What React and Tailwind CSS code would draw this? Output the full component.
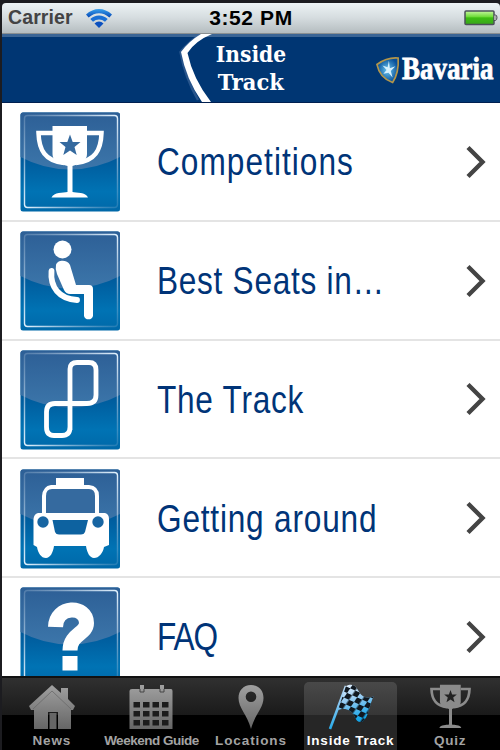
import React from 'react';

const TrophyShape = ({ star }) => (
  <>
    <path d="M32.500 14H67V42C67 48 62 51.500 57 52.500L52.500 54V80C56 81 66 80 68 85.500H31.500C34 80 43 81 47.500 80V54L42 52.500C36 50 32.500 47 32.500 42Z" fill="currentColor" />
    <path d="M33 21H18.500C19 38 25 49 44 51" fill="none" stroke="currentColor" strokeWidth="4.500" />
    <path d="M67 21H81.500C81 38 75 49 56 51" fill="none" stroke="currentColor" strokeWidth="4.500" />
    <path d="M50 22.500L52.700 30H60.500L54.500 35L56.700 43L50 38.400L43.300 43L45.500 35L39.500 30H47.300Z" fill={star} />
  </>
);

const SeatShape = () => (
  <g fill="none" stroke="white" strokeLinecap="round" strokeLinejoin="round">
    <circle cx="42.500" cy="18.500" r="9" fill="white" stroke="none" />
    <path d="M36 34C37 29 47 28 50 34L56 54H69Q73 54 73 58V85A4.700 4.700 0 0 1 64 85V63H50Q46 63 44 59L37 43Q35 38 36 34Z" fill="white" stroke="none" />
    <path d="M31.500 40C30 56 39 68 57 69" strokeWidth="5.800" />
  </g>
);

const TrackShape = () => (
  <path
    d="M50 80V19Q50 12.500 57 12.500H69Q76 12.500 76 20V45Q76 53.500 67 53.500H35Q26.500 53.500 26.500 62V77Q26.500 85.500 34 85.500H42Q50 85.500 50 77"
    fill="none"
    stroke="white"
    strokeWidth="4.800"
  />
);

const TaxiShape = () => (
  <>
    <path d="M36 9H64V16H69Q79 17 79 27V44H85Q89 45 89 50V76L84 78C83 84 79 89 74 89C70 89 67 84 66 77H34C33 84 30 89 26 89C21 89 18 84 17 78L13.500 76V50Q14 45 18 44H22V27Q23 17 31 16H36Z" fill="white" />
    <path d="M32 20H69Q75 20 75 27V44H26V27Q26 20 32 20Z" fill="#356a9f" />
    <path d="M32.500 51H68L65 63Q64 65.500 61 65.500H39Q36 65.500 35 63Z" fill="#0d62a0" />
    <circle cx="23" cy="53" r="5.700" fill="#1765a2" />
    <circle cx="78" cy="53" r="5.700" fill="#1765a2" />
  </>
);

const QuestionShape = () => (
  <>
    <path d="M35.500 40C36 18 66.500 18 66.500 36C66.500 47 50 47 50 63.500" fill="none" stroke="white" strokeWidth="15" />
    <rect x="42.500" y="69" width="15" height="14.500" fill="white" />
  </>
);

const rows = [
  { label: 'Competitions', text: 'tracking-[1.3px]', icon: <TrophyShape star="#356a9f" /> },
  { label: 'Best Seats in…', text: 'tracking-[0.9px]', icon: <SeatShape /> },
  { label: 'The Track', text: 'tracking-[0.9px]', icon: <TrackShape /> },
  { label: 'Getting around', text: 'tracking-[1px]', icon: <TaxiShape /> },
  { label: 'FAQ', text: 'tracking-[-1.3px]', icon: <QuestionShape /> },
];

const Tile = ({ children }) => (
  <svg viewBox="0 0 100 100" className="w-[100px] h-[100px] shrink-0 text-white">
    <defs>
      <linearGradient id="tileBase" x2="0" y2="1">
        <stop offset=".45" stopColor="#00599a" />
        <stop offset=".8" stopColor="#0073b4" />
        <stop offset="1" stopColor="#0068a8" />
      </linearGradient>
      <linearGradient id="tileGloss" x2="0" y2="1">
        <stop offset="0" stopColor="#2d5f96" />
        <stop offset="1" stopColor="#3c76aa" />
      </linearGradient>
      <linearGradient id="tileLine" x2="1" y2="1">
        <stop offset="0" stopColor="#a9c1da" stopOpacity=".3" />
        <stop offset=".5" stopColor="#e4f3ff" />
        <stop offset="1" stopColor="#a9c1da" stopOpacity=".2" />
      </linearGradient>
    </defs>
    <rect x=".5" y=".5" width="99.500" height="99" rx="2.500" fill="url(#tileBase)" />
    <path d="M.5 3Q.5.500 3 .5H97.500Q100 .5 100 3V45Q76 57.500 50 57.500T.5 45Z" fill="url(#tileGloss)" />
    <rect x="4.500" y="3.500" width="93" height="92" rx="3" fill="none" stroke="url(#tileLine)" strokeWidth="1.400" />
    {children}
  </svg>
);

const Chevron = () => (
  <svg viewBox="0 0 22 34" className="w-[22px] h-[34px] shrink-0 -mt-[1px]">
    <path d="M3 2.500L17.500 17L3 31.500" fill="none" stroke="#444" strokeWidth="4.400" />
  </svg>
);

const HouseIcon = () => (
  <svg viewBox="0 0 48 46" className="w-12 h-[46px]">
    <path d="M24 1L33 9V4H40V15L47 22L45 26H43V45H30V28H20V45H6V26H3L1 22Z" fill="url(#tabGrey)" />
    <path d="M5 25L24 7L43 25" fill="none" stroke="#6a6a6a" strokeWidth=".8" />
    <rect x="21.500" y="29" width="7" height="16" fill="#666" />
  </svg>
);

const CalendarIcon = () => (
  <svg viewBox="0 0 44 46" className="w-11 h-[46px]">
    <path d="M3 5H11V1H15V5H31V1H35V5H42Q43.500 5 43.500 7V45H.5V7Q.5 5 3 5Z" fill="url(#tabGrey)" />
    <path d="M11 5V8H15V5M31 5V8H35V5" fill="none" stroke="#444" strokeWidth="1" />
    {[18, 27, 36].map((y) =>
      [4.5, 14, 23.5, 33].map((x) => (
        <rect key={`${x}-${y}`} x={x} y={y} width="6.500" height="5.500" fill="#1c1c1c" />
      ))
    )}
  </svg>
);

const PinIcon = () => (
  <svg viewBox="0 0 28 46" className="w-7 h-[46px]">
    <path fillRule="evenodd" d="M14 1C6 1 1.500 7 1.500 14C1.500 24 10 30 14 45C18 30 26.500 24 26.500 14C26.500 7 22 1 14 1ZM14 7.500A5.300 5.300 0 1 1 14 18.100A5.300 5.300 0 1 1 14 7.500Z" fill="url(#tabGrey)" />
  </svg>
);

const FlagIcon = () => (
  <svg viewBox="0 0 48 48" className="w-12 h-12">
    <defs>
      <linearGradient id="flagBlue" x2=".3" y2="1">
        <stop offset="0" stopColor="#edf4ff" />
        <stop offset=".5" stopColor="#8fc9f2" />
        <stop offset="1" stopColor="#13a5e8" />
      </linearGradient>
      <pattern id="flagChecks" width="11" height="11" patternUnits="userSpaceOnUse" patternTransform="rotate(24) skewX(-10)">
        <rect width="5.500" height="5.500" fill="#101820" />
        <rect x="5.500" y="5.500" width="5.500" height="5.500" fill="#101820" />
      </pattern>
    </defs>
    <path d="M19 2L3 45" stroke="url(#flagBlue)" strokeWidth="2.600" />
    <path d="M19 2C26-1 29 2 32 8C36 14 41 15 47 12C42 20 42 34 35 38C27 39 29 30 23 27C19 24 14 25 11 26Z" fill="url(#flagBlue)" />
    <path d="M19 2C26-1 29 2 32 8C36 14 41 15 47 12C42 20 42 34 35 38C27 39 29 30 23 27C19 24 14 25 11 26Z" fill="url(#flagChecks)" />
  </svg>
);

const CupIcon = () => (
  <svg viewBox="16 13 68 74" className="w-[41px] h-[45px] text-[#8b8b8b]">
    <TrophyShape star="#222" />
  </svg>
);

const tabs = [
  { label: 'News', text: 'tracking-[0.8px]', icon: <HouseIcon /> },
  { label: 'Weekend Guide', text: 'tracking-[-0.5px]', icon: <CalendarIcon /> },
  { label: 'Locations', text: 'tracking-[0.9px]', icon: <PinIcon /> },
  { label: 'Inside Track', text: 'tracking-[0.8px]', icon: <FlagIcon />, active: true },
  { label: 'Quiz', text: 'tracking-[0.8px]', icon: <CupIcon /> },
];

const StatusBar = () => (
  <div className="relative h-[31px] shrink-0 rounded-t-[4px] bg-gradient-to-b from-[#edf3f5] via-[#d5dcdf] to-[#b5bdc0] border-b border-[#8a8f91] flex items-center justify-between pl-[6px] pr-[2px]">
    <div className="flex items-center gap-[13px]">
      <span className="text-[19.5px] leading-none font-bold text-[#444] tracking-[0.1px]">Carrier</span>
      <svg viewBox="0 0 26 19" className="w-[26px] h-[19px]">
        <defs>
          <linearGradient id="wifi" x2="0" y2="1">
            <stop offset="0" stopColor="#37a0ec" />
            <stop offset="1" stopColor="#0647b6" />
          </linearGradient>
        </defs>
        <path d="M13 0Q20 0 26 5.500L23.400 8.500Q18.500 4.200 13 4.200T2.600 8.500L0 5.500Q6 0 13 0Z" fill="url(#wifi)" />
        <path d="M13 6.500Q18 6.500 21.700 10L19 12.800Q16.500 10.500 13 10.500T7 12.800L4.300 10Q8 6.500 13 6.500Z" fill="#1a6fd4" />
        <path d="M13 12.500Q15.500 12.500 17.500 14.500L13 19L8.500 14.500Q10.500 12.500 13 12.500Z" fill="#0b50bf" />
      </svg>
    </div>
    <span className="absolute inset-x-0 top-[4px] text-center text-[21px] leading-[22px] font-bold text-black tracking-[0.6px]">3:52 PM</span>
    <svg viewBox="0 0 34 16" className="w-[34px] h-4">
      <defs>
        <linearGradient id="battery" x2="0" y2="1">
          <stop offset="0" stopColor="#c6f6a0" />
          <stop offset=".45" stopColor="#6adb33" />
          <stop offset=".5" stopColor="#3dbd12" />
          <stop offset="1" stopColor="#37a51a" />
        </linearGradient>
      </defs>
      <rect x="1" y="1" width="29" height="13.500" rx="1" fill="url(#battery)" stroke="#4b5158" strokeWidth="1.500" />
      <path d="M30 5H31.500Q33 5 33 7.500T31.500 10.500H30" fill="#aaa" stroke="#4b5158" />
    </svg>
  </div>
);

const Header = () => (
  <div className="h-[69px] shrink-0 bg-[#003673] border-t-[3px] border-t-[#3b6595] border-b border-b-[#001f50] flex items-center">
    <div className="w-[176px] shrink-0" />
    <svg viewBox="0 0 36 68" className="w-9 h-[68px] shrink-0 -mt-[3px]">
      <path d="M23 0Q11 8 2.500 18Q7 43 20 66" fill="none" stroke="#426b9d" strokeWidth="2.500" opacity=".6" />
      <path d="M34 0Q17 7 9.500 19Q15 45 33 68H24Q8 45 3 18Q11 7 23 0Z" fill="white" />
    </svg>
    <div className="w-[74px] shrink-0 text-center text-white font-bold text-[22.5px] leading-[28px] font-['DejaVu_Serif_Condensed','DejaVu_Serif',serif] flex flex-col items-center pb-[3px]">
      <span>Inside</span>
      <span className="scale-x-[1.04]">Track</span>
    </div>
    <div className="ml-auto flex items-center pr-[5px]">
      <svg viewBox="0 0 26 28" className="w-6 h-7 mr-[2px]">
        <defs>
          <radialGradient id="shield">
            <stop offset="0" stopColor="#6cc7ef" />
            <stop offset="1" stopColor="#07509a" />
          </radialGradient>
        </defs>
        <path d="M1 8Q12 0 24 1Q25 17 18 27.500Q4 23 1 8Z" fill="url(#shield)" stroke="#b3964a" strokeWidth="1.800" />
        <path d="M14 4L15 12L21 10L16 15L18 22L13.500 17L8 18L11.500 14L7 9L12.500 11Z" fill="#d5f1ff" />
      </svg>
      <div className="w-[93px] h-8 flex items-center pb-[2px]">
        <span className="origin-left scale-x-[0.87] text-white font-bold text-[31px] leading-8 font-['Liberation_Serif',serif] [-webkit-text-stroke:0.8px_white]">Bavaria</span>
      </div>
    </div>
  </div>
);

const App = () => {
  return (
    <div className="w-[500px] h-[750px] overflow-hidden bg-[#1c1c20] pt-[3px] pl-[2px] flex flex-col font-['Liberation_Sans',sans-serif]">
      <svg width="0" height="0" className="absolute">
        <defs>
          <linearGradient id="tabGrey" x2="0" y2="1">
            <stop offset="0" stopColor="#a0a0a0" />
            <stop offset="1" stopColor="#666" />
          </linearGradient>
        </defs>
      </svg>
      <StatusBar />
      <Header />
      <div className="h-[573px] shrink-0 overflow-hidden bg-white">
        {rows.map((row) => (
          <div key={row.label} className="h-[118.75px] pt-[2px] border-b-2 border-[#e4e4e4] flex items-center pl-[18px] pr-[13px]">
            <Tile>{row.icon}</Tile>
            <div className="flex-1 min-w-0 pl-[37px] -mt-[2px] flex">
              <span className={`origin-left scale-x-[0.8] whitespace-nowrap text-[39.5px] leading-[44px] text-[#003478] ${row.text}`}>
                {row.label}
              </span>
            </div>
            <Chevron />
          </div>
        ))}
      </div>
      <div className="h-[74px] shrink-0 border-t-2 border-[#111] bg-[linear-gradient(#303030,#1a1a1a_37px,#000_37px)] grid grid-cols-5">
        {tabs.map((tab) => (
          <div
            key={tab.label}
            className={`mx-[3px] mt-[4px] rounded-t-[5px] flex flex-col items-center ${tab.active ? 'bg-[linear-gradient(#494949,#363636_33px,#262626_33px)] text-white' : 'text-[#a3a3a3]'}`}
          >
            <div className="h-[51px] pt-[2px] flex items-start justify-center">{tab.icon}</div>
            <span className={`whitespace-nowrap text-[13.5px] leading-4 font-bold ${tab.text}`}>{tab.label}</span>
          </div>
        ))}
      </div>
    </div>
  );
};

export default App;
